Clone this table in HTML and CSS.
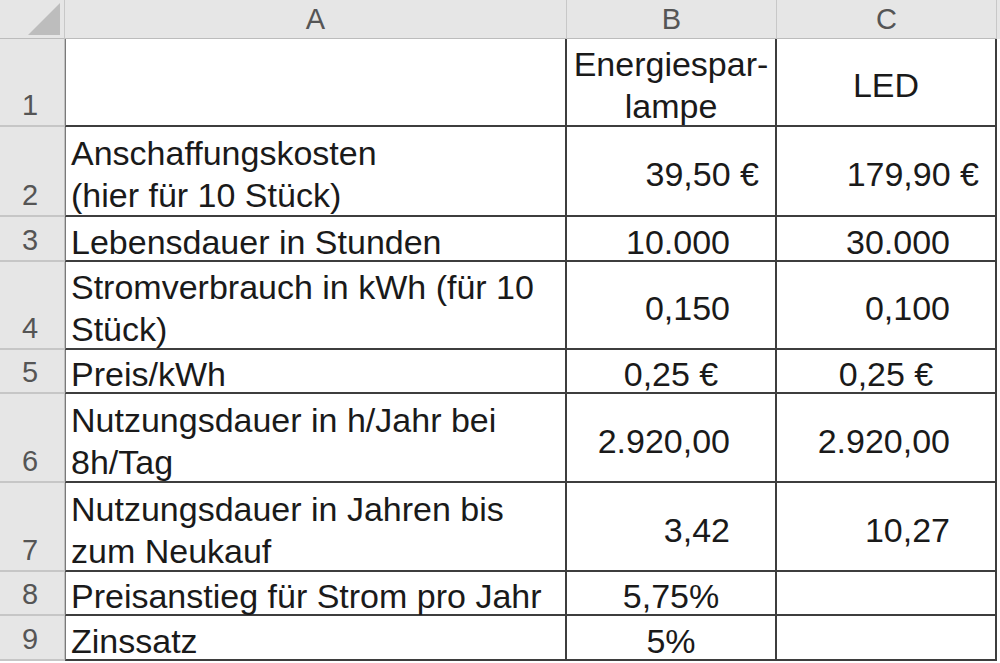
FILE: index.html
```html
<!DOCTYPE html>
<html lang="de">
<head>
<meta charset="utf-8">
<title>Energiesparlampe vs LED</title>
<link rel="stylesheet" href="styles.css">
</head>
<body>
<div class="sheet">
  <div class="corner"><svg class="tri" width="34" height="34" viewBox="0 0 34 34"><polygon points="33,1 33,33 1,33" fill="#bdbdbd"/></svg></div>
  <div class="colhead">A</div>
  <div class="colhead">B</div>
  <div class="colhead">C</div>

  <div class="rowhead">1</div>
  <div class="cell txt"></div>
  <div class="cell ctr">Energiespar-<br>lampe</div>
  <div class="cell ctr">LED</div>

  <div class="rowhead">2</div>
  <div class="cell txt">Anschaffungskosten<br>(hier für 10 Stück)</div>
  <div class="cell cur">39,50 €</div>
  <div class="cell cur">179,90 €</div>

  <div class="rowhead">3</div>
  <div class="cell txt">Lebensdauer in Stunden</div>
  <div class="cell num">10.000</div>
  <div class="cell num">30.000</div>

  <div class="rowhead">4</div>
  <div class="cell txt">Stromverbrauch in kWh (für 10<br>Stück)</div>
  <div class="cell num">0,150</div>
  <div class="cell num">0,100</div>

  <div class="rowhead">5</div>
  <div class="cell txt">Preis/kWh</div>
  <div class="cell ctr">0,25 €</div>
  <div class="cell ctr">0,25 €</div>

  <div class="rowhead">6</div>
  <div class="cell txt">Nutzungsdauer in h/Jahr bei<br>8h/Tag</div>
  <div class="cell num">2.920,00</div>
  <div class="cell num">2.920,00</div>

  <div class="rowhead">7</div>
  <div class="cell txt">Nutzungsdauer in Jahren bis<br>zum Neukauf</div>
  <div class="cell num">3,42</div>
  <div class="cell num">10,27</div>

  <div class="rowhead">8</div>
  <div class="cell txt">Preisanstieg für Strom pro Jahr</div>
  <div class="cell ctr">5,75%</div>
  <div class="cell ctr"></div>

  <div class="rowhead">9</div>
  <div class="cell txt">Zinssatz</div>
  <div class="cell ctr">5%</div>
  <div class="cell ctr"></div>
</div>
</body>
</html>
```

FILE: styles.css
```css
html, body {
  margin: 0;
  padding: 0;
}
body {
  width: 1000px;
  height: 663px;
  overflow: hidden;
  background: linear-gradient(#e6e6e6 0, #e6e6e6 39px, #ffffff 39px);
  font-family: "Liberation Sans", Arial, sans-serif;
}
.sheet {
  display: grid;
  grid-template-columns: 65px 502px 210px 220px;
  grid-template-rows: 39px 88px 90px 45px 88px 44px 89px 89px 44px 45px 10px;
  background: #ffffff;
  width: 997px;
}
.corner {
  background: #e6e6e6;
  border-right: 1px solid #c8c8c8;
  border-bottom: 1px solid #bcbcbc;
  box-sizing: border-box;
  position: relative;
}
.tri {
  position: absolute;
  left: 27px;
  top: 2px;
}
.colhead {
  background: #e6e6e6;
  border-right: 1px solid #c8c8c8;
  border-bottom: 1px solid #bcbcbc;
  box-sizing: border-box;
  display: flex;
  align-items: center;
  justify-content: center;
  font-size: 29px;
  color: #555555;
}
.rowhead {
  background: #e6e6e6;
  border-right: 1px solid #c0c0c0;
  border-bottom: 2px solid #c6c6c6;
  box-sizing: border-box;
  display: flex;
  align-items: flex-end;
  justify-content: center;
  padding-bottom: 2px;
  padding-right: 4px;
  font-size: 29px;
  line-height: 36px;
  color: #555555;
}
.cell {
  border-right: 2px solid #3e3e3e;
  border-bottom: 2px solid #3e3e3e;
  box-sizing: border-box;
  display: flex;
  align-items: center;
  padding-top: 6px;
  font-size: 34px;
  line-height: 42px;
  color: #1a1a1a;
  white-space: nowrap;
}
.txt {
  border-left: 1px solid #7a7a7a;
  padding-left: 5px;
  justify-content: flex-start;
}
.ctr {
  justify-content: center;
  text-align: center;
}
.num {
  justify-content: flex-end;
  padding-right: 45px;
}
.cur {
  justify-content: flex-end;
  padding-right: 16px;
}
```
